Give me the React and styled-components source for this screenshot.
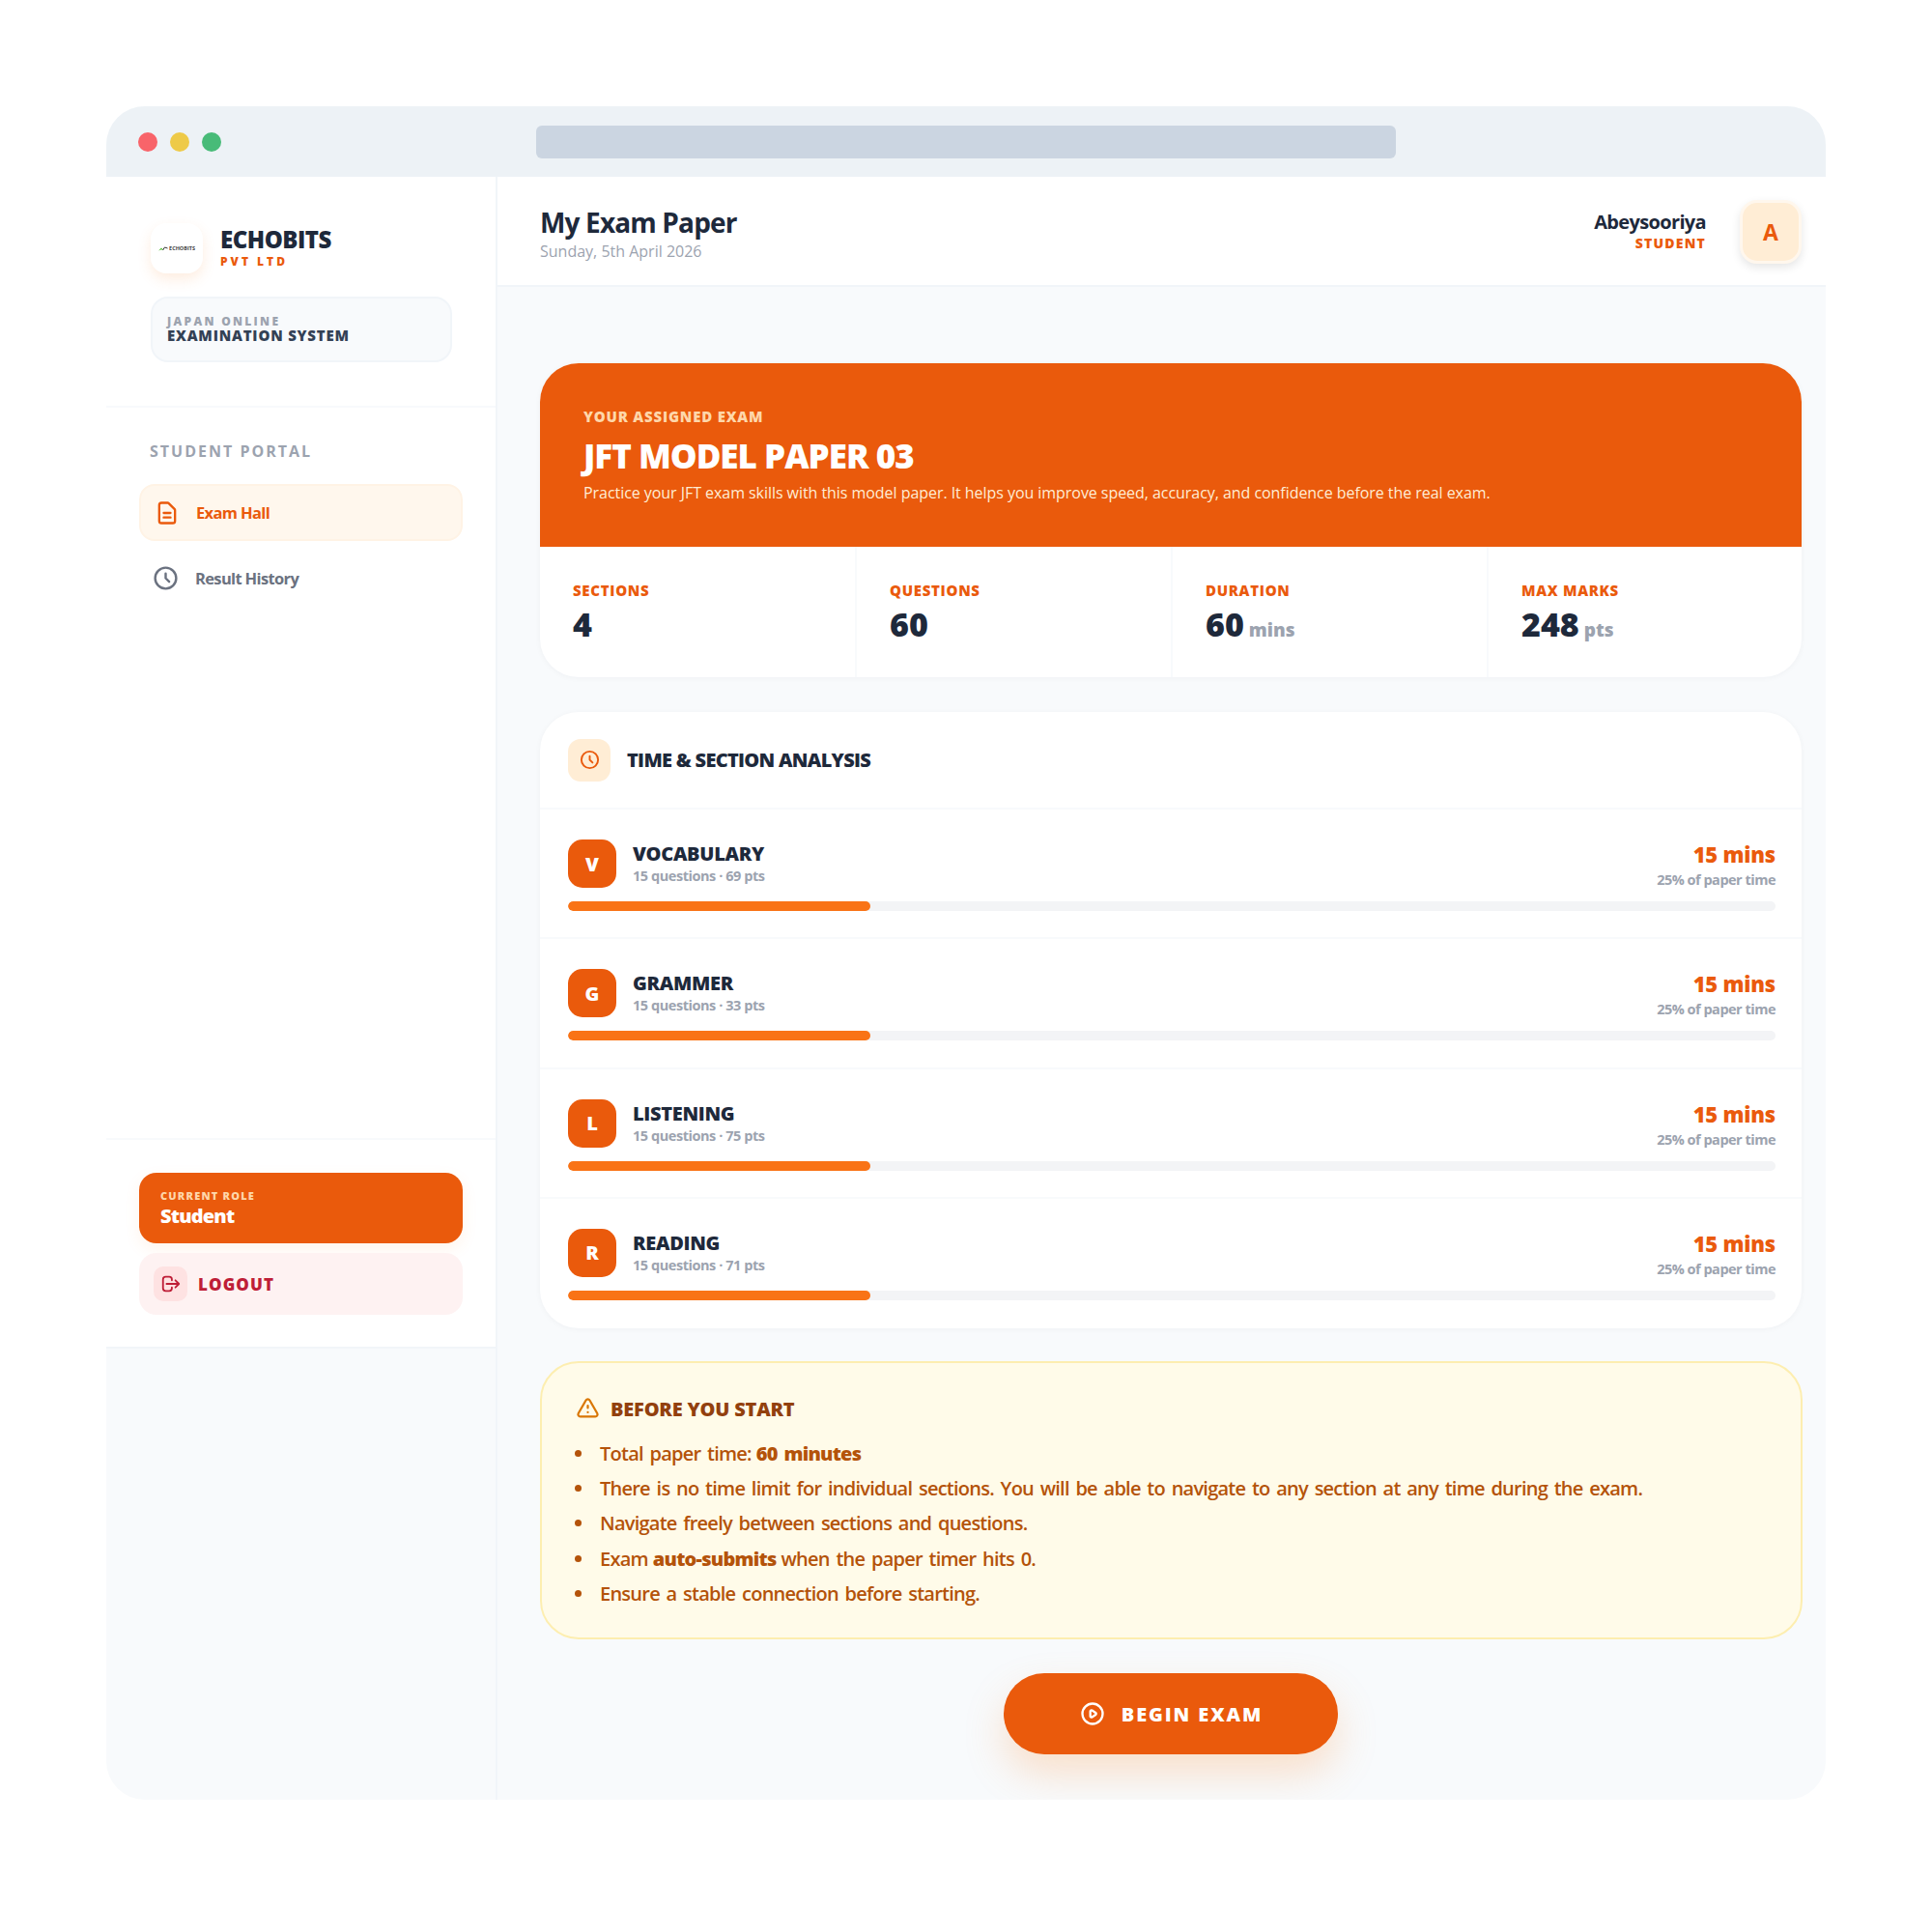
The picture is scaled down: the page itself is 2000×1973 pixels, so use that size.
import React from 'react';
import styled, { createGlobalStyle } from 'styled-components';
import {
  HiOutlineDocumentText,
  HiOutlineClock,
  HiOutlineLogout,
  HiOutlineExclamation,
  HiOutlinePlay,
} from 'react-icons/hi';

const GlobalStyle = createGlobalStyle`
  html, body { margin: 0; padding: 0; background: #fff; }
  * { box-sizing: border-box; }
  body { font-family: "Open Sans", "Noto Sans", sans-serif; color: #1e293b; }
`;

const Page = styled.div`
  width: 2000px;
  height: 1973px;
  padding: 110px;
`;

const Window = styled.div`
  height: 1753px;
  border-radius: 40px;
  overflow: hidden;
  background: #f8fafc;
  display: flex;
  flex-direction: column;
`;

const TitleBar = styled.div`
  height: 73px;
  flex: none;
  background: #edf2f6;
  display: flex;
  align-items: center;
  padding: 0 33px;
`;

const Dots = styled.div`
  display: flex;
  gap: 13px;
  width: 412px;
`;

const Dot = styled.span`
  width: 20px;
  height: 20px;
  border-radius: 50%;
  background: ${p => p.color};
`;

const UrlBar = styled.div`
  width: 890px;
  height: 34px;
  border-radius: 6px;
  background: #cbd5e1;
`;

const Body = styled.div`
  flex: 1;
  display: flex;
  min-height: 0;
`;

const SideColumn = styled.div`
  width: 405px;
  flex: none;
  border-right: 2px solid #f1f5f9;
`;

const Sidebar = styled.aside`
  height: 1213px;
  background: #fff;
  border-bottom: 2px solid #f1f5f9;
  display: flex;
  flex-direction: column;
`;

const Brand = styled.div`
  height: 239px;
  flex: none;
  padding: 48px 46px 0;
  border-bottom: 2px solid #f8fafc;
`;

const BrandRow = styled.div`
  display: flex;
  align-items: center;
  gap: 18px;
  height: 52px;
`;

const LogoBox = styled.div`
  width: 54px;
  height: 52px;
  border-radius: 16px;
  background: #fff;
  box-shadow: 0 6px 14px rgba(251, 146, 60, 0.16);
  display: flex;
  align-items: center;
  justify-content: center;
  gap: 1px;
`;

const LogoText = styled.span`
  font-size: 5.5px;
  font-weight: 700;
  color: #444;
`;

const BrandText = styled.div`
  padding-bottom: 3px;
`;

const BrandName = styled.div`
  font-size: 24px;
  line-height: 28px;
  font-weight: 800;
  letter-spacing: -0.5px;
  color: #1e293b;
`;

const BrandSub = styled.div`
  margin-top: 2px;
  font-size: 12px;
  line-height: 14px;
  font-weight: 800;
  letter-spacing: 3px;
  color: #ea5a0c;
`;

const SystemBox = styled.div`
  margin-top: 24px;
  width: 312px;
  height: 68px;
  border-radius: 18px;
  background: #f8fafc;
  border: 2px solid #f1f5f9;
  padding: 17px 15px 0;
`;

const SystemTop = styled.div`
  font-size: 12px;
  line-height: 13px;
  font-weight: 800;
  letter-spacing: 2.3px;
  color: #9ca3af;
`;

const SystemMain = styled.div`
  font-size: 15px;
  line-height: 17px;
  font-weight: 800;
  letter-spacing: 0.8px;
  color: #334155;
`;

const Nav = styled.nav`
  flex: 1;
  padding: 34px 34px 0;
`;

const NavTitle = styled.div`
  font-size: 16px;
  line-height: 22px;
  font-weight: 700;
  letter-spacing: 2px;
  color: #9ca3af;
  padding-left: 11px;
  margin-bottom: 23px;
`;

const NavItem = styled.div`
  height: 59px;
  border-radius: 16px;
  display: flex;
  align-items: center;
  gap: 16px;
  padding-left: 13px;
  margin-bottom: 9px;
  font-size: 16.5px;
  font-weight: 700;
  letter-spacing: -0.65px;
  background: ${p => (p.active ? '#fff7ed' : 'transparent')};
  border: ${p => (p.active ? '2px solid #fff3e5' : 'none')};
  color: ${p => (p.active ? '#ea5a0c' : '#6b7280')};
`;

const SideFooter = styled.div`
  border-top: 2px solid #f8fafc;
  padding: 34px 34px 0;
  height: 216px;
  flex: none;
  display: flex;
  flex-direction: column;
  gap: 10px;
`;

const RoleCard = styled.div`
  height: 73px;
  border-radius: 18px;
  background: #ea5a0c;
  padding: 17px 22px 0;
  box-shadow: 0 6px 16px rgba(251, 146, 60, 0.1);
`;

const RoleLabel = styled.div`
  font-size: 11px;
  line-height: 14px;
  font-weight: 800;
  letter-spacing: 1.2px;
  color: #fed7aa;
`;

const RoleName = styled.div`
  margin-top: 2px;
  font-size: 20px;
  line-height: 24px;
  font-weight: 800;
  letter-spacing: -0.8px;
  color: #fff;
`;

const LogoutBtn = styled.div`
  height: 64px;
  border-radius: 18px;
  background: #fef2f2;
  display: flex;
  align-items: center;
  gap: 11px;
  padding-left: 15px;
  font-size: 17px;
  font-weight: 800;
  letter-spacing: 1.1px;
  color: #be1e37;
`;

const LogoutIcon = styled.span`
  width: 35px;
  height: 36px;
  border-radius: 10px;
  background: #fee2e2;
  display: flex;
  align-items: center;
  justify-content: center;
`;

const Main = styled.main`
  flex: 1;
  min-width: 0;
  display: flex;
  flex-direction: column;
`;

const Header = styled.header`
  height: 114px;
  flex: none;
  background: #fff;
  border-bottom: 2px solid #f1f5f9;
  display: flex;
  align-items: center;
  justify-content: space-between;
  padding: 0 25px 0 44px;
`;

const TitleBlock = styled.div`
  padding-top: 6px;
`;

const PageTitle = styled.div`
  font-size: 28px;
  line-height: 32px;
  font-weight: 700;
  letter-spacing: -0.85px;
  color: #1e293b;
`;

const PageDate = styled.div`
  margin-top: 4px;
  font-size: 16px;
  line-height: 20px;
  color: #9ca3af;
`;

const UserBlock = styled.div`
  display: flex;
  align-items: center;
  gap: 35px;
`;

const UserText = styled.div`
  text-align: right;
`;

const UserName = styled.div`
  font-size: 20px;
  line-height: 24px;
  font-weight: 700;
  letter-spacing: -0.65px;
  color: #1e293b;
`;

const UserRole = styled.div`
  margin-top: 2px;
  font-size: 14px;
  line-height: 16px;
  font-weight: 800;
  letter-spacing: 1.2px;
  color: #ea5a0c;
`;

const Avatar = styled.div`
  width: 64px;
  height: 66px;
  margin-top: 2px;
  border-radius: 18px;
  background: #ffedd5;
  border: 3px solid #fff7ed;
  box-shadow: 0 4px 10px rgba(0, 0, 0, 0.1);
  display: flex;
  align-items: center;
  justify-content: center;
  font-size: 23px;
  font-weight: 700;
  color: #ea5a0c;
`;

const Content = styled.div`
  padding: 79px 25px 0 44px;
`;

const ExamCard = styled.section`
  border-radius: 40px;
  overflow: hidden;
  background: #fff;
  box-shadow: 0 1px 6px rgba(15, 23, 42, 0.04);
`;

const Hero = styled.div`
  height: 190px;
  background: #ea5a0c;
  padding: 43px 45px 0;
`;

const HeroLabel = styled.div`
  font-size: 15px;
  line-height: 24px;
  font-weight: 800;
  letter-spacing: 0.8px;
  color: #fed7aa;
`;

const HeroTitle = styled.div`
  font-size: 35px;
  line-height: 44px;
  margin-top: 7px;
  font-weight: 800;
  letter-spacing: -1px;
  color: #fff;
`;

const HeroText = styled.div`
  font-size: 16px;
  line-height: 24px;
  margin-top: 4px;
  letter-spacing: -0.05px;
  color: #ffedd5;
`;

const Stats = styled.div`
  height: 135px;
  display: grid;
  grid-template-columns: 328px 327px 327px 1fr;
`;

const Stat = styled.div`
  padding: 35px 33px 0 34px;
  border-right: ${p => (p.last ? 'none' : '2px solid #f8fafc')};
`;

const StatLabel = styled.div`
  font-size: 15px;
  line-height: 20px;
  font-weight: 800;
  letter-spacing: 0.7px;
  color: #ea5a0c;
`;

const StatValue = styled.div`
  margin-top: 1px;
  font-size: 34px;
  line-height: 48px;
  font-weight: 800;
  color: #1e293b;
`;

const StatUnit = styled.span`
  font-size: 19px;
  font-weight: 800;
  color: #9ca3af;
  margin-left: 5px;
`;

const AnalysisCard = styled.section`
  margin-top: 36px;
  border-radius: 40px;
  background: #fff;
  box-shadow: 0 1px 6px rgba(15, 23, 42, 0.04);
`;

const AnalysisHead = styled.div`
  height: 101px;
  border-bottom: 2px solid #f8fafc;
  display: flex;
  align-items: center;
  gap: 17px;
  padding: 0 29px;
`;

const AnalysisIcon = styled.div`
  width: 44px;
  height: 44px;
  border-radius: 13px;
  background: #ffedd5;
  display: flex;
  align-items: center;
  justify-content: center;
`;

const AnalysisTitle = styled.div`
  font-size: 20px;
  font-weight: 800;
  letter-spacing: -0.7px;
  color: #1e293b;
`;

const Row = styled.div`
  height: 134.25px;
  padding: 31px 27px 0 29px;
  border-bottom: ${p => (p.last ? 'none' : '2px solid #f8fafc')};
`;

const RowTop = styled.div`
  display: flex;
  align-items: center;
  justify-content: space-between;
  height: 50px;
`;

const RowLeft = styled.div`
  display: flex;
  align-items: center;
  gap: 17px;
`;

const Badge = styled.div`
  width: 50px;
  height: 50px;
  border-radius: 15px;
  background: #ea5a0c;
  color: #fff;
  font-size: 20px;
  font-weight: 800;
  display: flex;
  align-items: center;
  justify-content: center;
`;

const RowName = styled.div`
  font-size: 20px;
  line-height: 24px;
  font-weight: 800;
  letter-spacing: -0.3px;
  color: #1e293b;
`;

const RowSub = styled.div`
  margin-top: 2px;
  font-size: 14.5px;
  line-height: 18px;
  font-weight: 700;
  letter-spacing: -0.45px;
  color: #9ca3af;
`;

const RowRight = styled.div`
  text-align: right;
  padding-top: 3px;
`;

const RowMins = styled.div`
  font-size: 22px;
  line-height: 28px;
  font-weight: 800;
  letter-spacing: -0.2px;
  color: #ea5a0c;
`;

const RowShare = styled.div`
  margin-top: 3px;
  font-size: 14.5px;
  line-height: 20px;
  font-weight: 700;
  letter-spacing: -0.5px;
  color: #9ca3af;
`;

const Track = styled.div`
  margin-top: 14px;
  height: 10px;
  border-radius: 5px;
  background: #f3f4f6;
  overflow: hidden;
`;

const Fill = styled.div`
  height: 100%;
  border-radius: 5px;
  background: #f97316;
`;

const Notice = styled.section`
  margin-top: 34px;
  margin-right: -1px;
  height: 288px;
  border-radius: 40px;
  background: #fffbe9;
  border: 2px solid #fdeeb0;
  padding: 32px 34px 0;
  color: #b4530a;
`;

const NoticeHead = styled.div`
  display: flex;
  align-items: center;
  gap: 10px;
  height: 30px;
  font-size: 20px;
  font-weight: 800;
  letter-spacing: -0.2px;
  color: #92400e;
`;

const NoticeList = styled.ul`
  list-style: none;
  margin: 13px 0 0;
  padding: 0;
`;

const NoticeItem = styled.li`
  height: 36.4px;
  display: flex;
  align-items: center;
  font-size: 20px;
  font-weight: 600;
  letter-spacing: -0.76px;
  word-spacing: 2.25px;
  &::before {
    content: '';
    width: 7px;
    height: 7px;
    border-radius: 50%;
    background: #b4530a;
    margin-right: 19px;
    flex: none;
  }
  b {
    font-weight: 800;
    margin: 0 5px;
  }
`;

const ActionRow = styled.div`
  margin-top: 35px;
  display: flex;
  justify-content: center;
`;

const BeginBtn = styled.button`
  width: 346px;
  height: 84px;
  border: none;
  border-radius: 42px;
  background: #ea5a0c;
  box-shadow: 0 20px 40px rgba(251, 146, 60, 0.25);
  color: #fff;
  font-family: inherit;
  font-size: 20px;
  font-weight: 800;
  letter-spacing: 1.9px;
  display: flex;
  align-items: center;
  justify-content: center;
  gap: 16px;
`;

const sections = [
  { letter: 'V', name: 'VOCABULARY', pts: 69 },
  { letter: 'G', name: 'GRAMMER', pts: 33 },
  { letter: 'L', name: 'LISTENING', pts: 75 },
  { letter: 'R', name: 'READING', pts: 71 },
];

const stats = [
  { label: 'SECTIONS', value: '4' },
  { label: 'QUESTIONS', value: '60' },
  { label: 'DURATION', value: '60', unit: 'mins' },
  { label: 'MAX MARKS', value: '248', unit: 'pts' },
];

export default function App() {
  return (
    <Page>
      <GlobalStyle />
      <Window>
        <TitleBar>
          <Dots>
            <Dot color="#f8646a" />
            <Dot color="#eeca48" />
            <Dot color="#48bb78" />
          </Dots>
          <UrlBar />
        </TitleBar>
        <Body>
          <SideColumn>
            <Sidebar>
              <Brand>
                <BrandRow>
                  <LogoBox>
                    <svg width="10" height="5" viewBox="0 0 10 5">
                      <path d="M0 4.5 L3 1.5 L5 3.5 L2.5 3.5 Z" fill="#5cc13a" />
                      <path d="M4.5 4 L6.5 1 L9.5 2" fill="none" stroke="#333" strokeWidth="1" />
                    </svg>
                    <LogoText>ECHOBITS</LogoText>
                  </LogoBox>
                  <BrandText>
                    <BrandName>ECHOBITS</BrandName>
                    <BrandSub>PVT LTD</BrandSub>
                  </BrandText>
                </BrandRow>
                <SystemBox>
                  <SystemTop>JAPAN ONLINE</SystemTop>
                  <SystemMain>EXAMINATION SYSTEM</SystemMain>
                </SystemBox>
              </Brand>
              <Nav>
                <NavTitle>STUDENT PORTAL</NavTitle>
                <NavItem active>
                  <HiOutlineDocumentText size={28} />
                  Exam Hall
                </NavItem>
                <NavItem>
                  <HiOutlineClock size={29} />
                  Result History
                </NavItem>
              </Nav>
              <SideFooter>
                <RoleCard>
                  <RoleLabel>CURRENT ROLE</RoleLabel>
                  <RoleName>Student</RoleName>
                </RoleCard>
                <LogoutBtn>
                  <LogoutIcon>
                    <HiOutlineLogout size={22} />
                  </LogoutIcon>
                  LOGOUT
                </LogoutBtn>
              </SideFooter>
            </Sidebar>
          </SideColumn>
          <Main>
            <Header>
              <TitleBlock>
                <PageTitle>My Exam Paper</PageTitle>
                <PageDate>Sunday, 5th April 2026</PageDate>
              </TitleBlock>
              <UserBlock>
                <UserText>
                  <UserName>Abeysooriya</UserName>
                  <UserRole>STUDENT</UserRole>
                </UserText>
                <Avatar>A</Avatar>
              </UserBlock>
            </Header>
            <Content>
              <ExamCard>
                <Hero>
                  <HeroLabel>YOUR ASSIGNED EXAM</HeroLabel>
                  <HeroTitle>JFT MODEL PAPER 03</HeroTitle>
                  <HeroText>
                    Practice your JFT exam skills with this model paper. It helps you improve speed, accuracy, and confidence before the real exam.
                  </HeroText>
                </Hero>
                <Stats>
                  {stats.map((s, i) => (
                    <Stat key={s.label} last={i === stats.length - 1}>
                      <StatLabel>{s.label}</StatLabel>
                      <StatValue>
                        {s.value}
                        {s.unit && <StatUnit>{s.unit}</StatUnit>}
                      </StatValue>
                    </Stat>
                  ))}
                </Stats>
              </ExamCard>
              <AnalysisCard>
                <AnalysisHead>
                  <AnalysisIcon>
                    <HiOutlineClock size={23} color="#ea5a0c" />
                  </AnalysisIcon>
                  <AnalysisTitle>TIME &amp; SECTION ANALYSIS</AnalysisTitle>
                </AnalysisHead>
                {sections.map((s, i) => (
                  <Row key={s.name} last={i === sections.length - 1}>
                    <RowTop>
                      <RowLeft>
                        <Badge>{s.letter}</Badge>
                        <div>
                          <RowName>{s.name}</RowName>
                          <RowSub>15 questions · {s.pts} pts</RowSub>
                        </div>
                      </RowLeft>
                      <RowRight>
                        <RowMins>15 mins</RowMins>
                        <RowShare>25% of paper time</RowShare>
                      </RowRight>
                    </RowTop>
                    <Track>
                      <Fill style={{ width: '25%' }} />
                    </Track>
                  </Row>
                ))}
              </AnalysisCard>
              <Notice>
                <NoticeHead>
                  <HiOutlineExclamation size={27} color="#d97706" />
                  BEFORE YOU START
                </NoticeHead>
                <NoticeList>
                  <NoticeItem><span>Total paper time:<b>60 minutes</b></span></NoticeItem>
                  <NoticeItem><span>There is no time limit for individual sections. You will be able to navigate to any section at any time during the exam.</span></NoticeItem>
                  <NoticeItem><span>Navigate freely between sections and questions.</span></NoticeItem>
                  <NoticeItem><span>Exam<b>auto-submits</b>when the paper timer hits 0.</span></NoticeItem>
                  <NoticeItem><span>Ensure a stable connection before starting.</span></NoticeItem>
                </NoticeList>
              </Notice>
              <ActionRow>
                <BeginBtn>
                  <HiOutlinePlay size={28} />
                  BEGIN EXAM
                </BeginBtn>
              </ActionRow>
            </Content>
          </Main>
        </Body>
      </Window>
    </Page>
  );
}
